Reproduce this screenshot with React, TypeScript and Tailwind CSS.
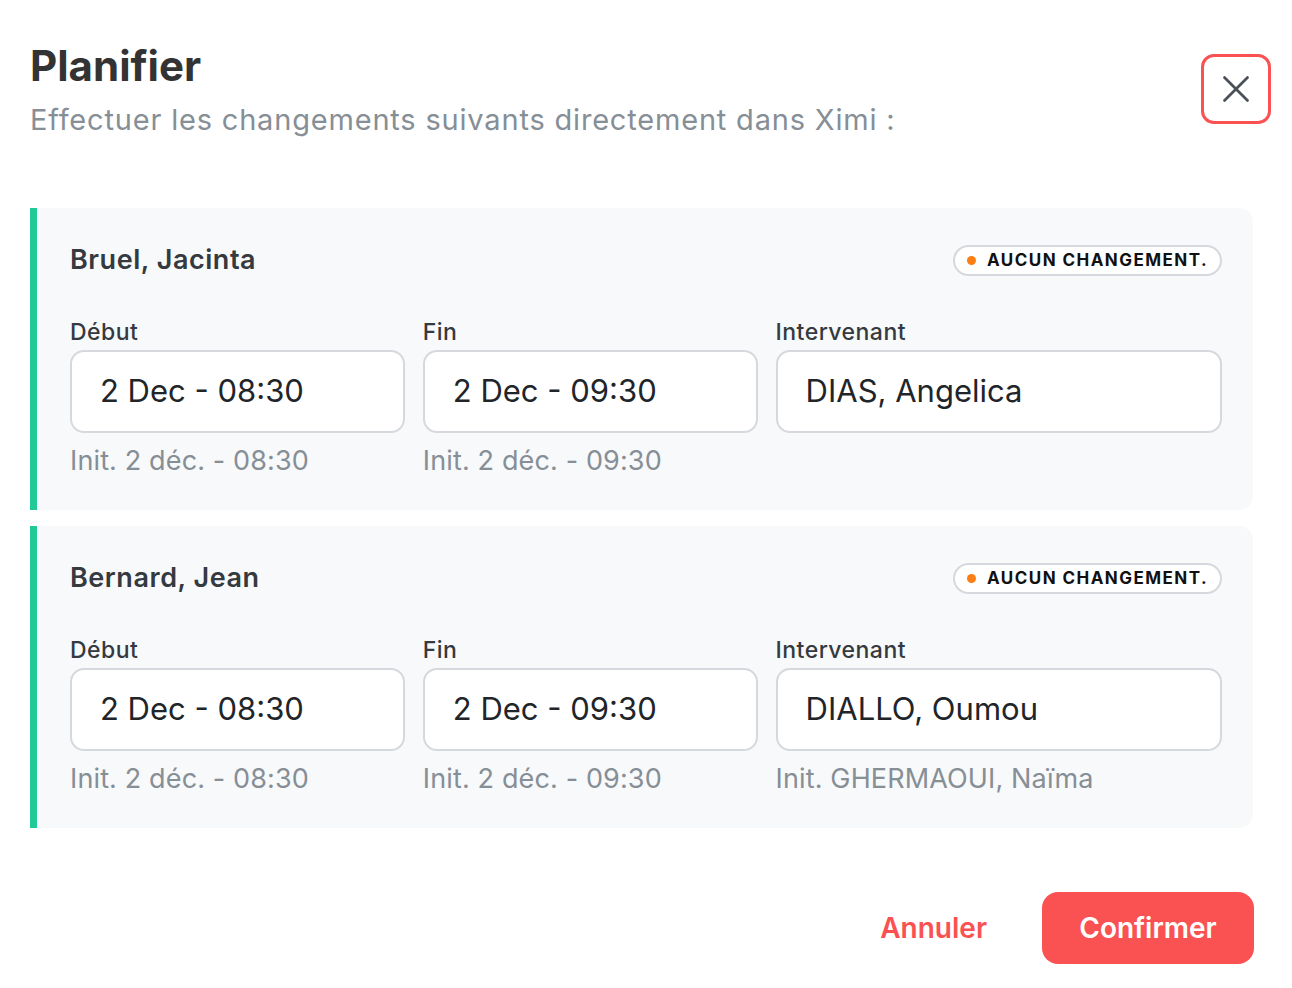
import { X } from "lucide-react";

const rows = [
  {
    id: 1,
    name: "Bruel, Jacinta",
    start: "2 Dec - 08:30",
    end: "2 Dec - 09:30",
    worker: "DIAS, Angelica",
    initStart: "Init. 2 déc. - 08:30",
    initEnd: "Init. 2 déc. - 09:30",
    initWorker: "",
  },
  {
    id: 2,
    name: "Bernard, Jean",
    start: "2 Dec - 08:30",
    end: "2 Dec - 09:30",
    worker: "DIALLO, Oumou",
    initStart: "Init. 2 déc. - 08:30",
    initEnd: "Init. 2 déc. - 09:30",
    initWorker: "Init. GHERMAOUI, Naïma",
  },
];

function Field({ label, value, hint }: { label: string; value: string; hint: string }) {
  return (
    <div className="flex flex-col">
      <label className="text-[23px] leading-[28px] font-medium tracking-[0.02em] text-[#343a40]">{label}</label>
      <div className="mt-[4px] h-[83px] rounded-[14px] border-2 border-[#d5d9de] bg-white flex items-center pl-[28px] text-[31px] text-[#212529]">
        {value}
      </div>
      <div className="mt-[12px] h-[32px] text-[27px] leading-[32px] tracking-[0.005em] text-[#868e96]">{hint}</div>
    </div>
  );
}

export default function App() {
  return (
    <div
      className="min-h-screen bg-white pl-[30px] pr-[21px] pt-[41px]"
      style={{ fontFamily: "Inter, 'Noto Sans', sans-serif" }}
    >
      {/* Header */}
      <div className="flex items-start justify-between">
        <div>
          <h1 className="text-[42px] leading-[50px] font-bold text-[#333333]">Planifier</h1>
          <p className="mt-[12px] text-[29px] leading-[34px] tracking-[0.028em] text-[#868e96]">
            Effectuer les changements suivants directement dans Ximi :
          </p>
        </div>
        <button className="mt-[13px] w-[70px] h-[70px] rounded-[13px] border-[3px] border-[#fa5252] flex items-center justify-center text-[#495057]">
          <X className="w-[46px] h-[46px]" strokeWidth={1.4} />
        </button>
      </div>

      {/* Cards */}
      <div className="mt-[71px] mr-[18px] flex flex-col gap-[16px]">
        {rows.map((row) => (
          <div
            key={row.id}
            className="bg-[#f8f9fa] border-l-[7px] border-[#20c997] rounded-r-[14px] pl-[33px] pr-[31px] pt-[37px] pb-[33px]"
          >
            <div className="flex items-center justify-between h-[31px]">
              <h3 className="text-[27px] font-semibold tracking-[0.02em] text-[#343a40]">{row.name}</h3>
              <span className="h-[31px] px-[12px] rounded-full border-2 border-[#d5d9de] bg-white flex items-center gap-[11px]">
                <span className="w-[9px] h-[9px] rounded-full bg-[#fd7e14]" />
                <span className="text-[17px] font-bold tracking-[0.085em] text-[#111111]">AUCUN CHANGEMENT.</span>
              </span>
            </div>
            <div className="mt-[42px] grid grid-cols-[3fr_3fr_4fr] gap-[18px]">
              <Field label="Début" value={row.start} hint={row.initStart} />
              <Field label="Fin" value={row.end} hint={row.initEnd} />
              <Field label="Intervenant" value={row.worker} hint={row.initWorker} />
            </div>
          </div>
        ))}
      </div>

      {/* Footer */}
      <div className="mt-[64px] mr-[17px] flex items-center justify-end gap-[55px]">
        <button className="text-[28px] font-semibold text-[#fa5252]">Annuler</button>
        <button className="w-[212px] h-[72px] rounded-[16px] bg-[#fa5252] text-white text-[28px] font-semibold">
          Confirmer
        </button>
      </div>
    </div>
  );
}
